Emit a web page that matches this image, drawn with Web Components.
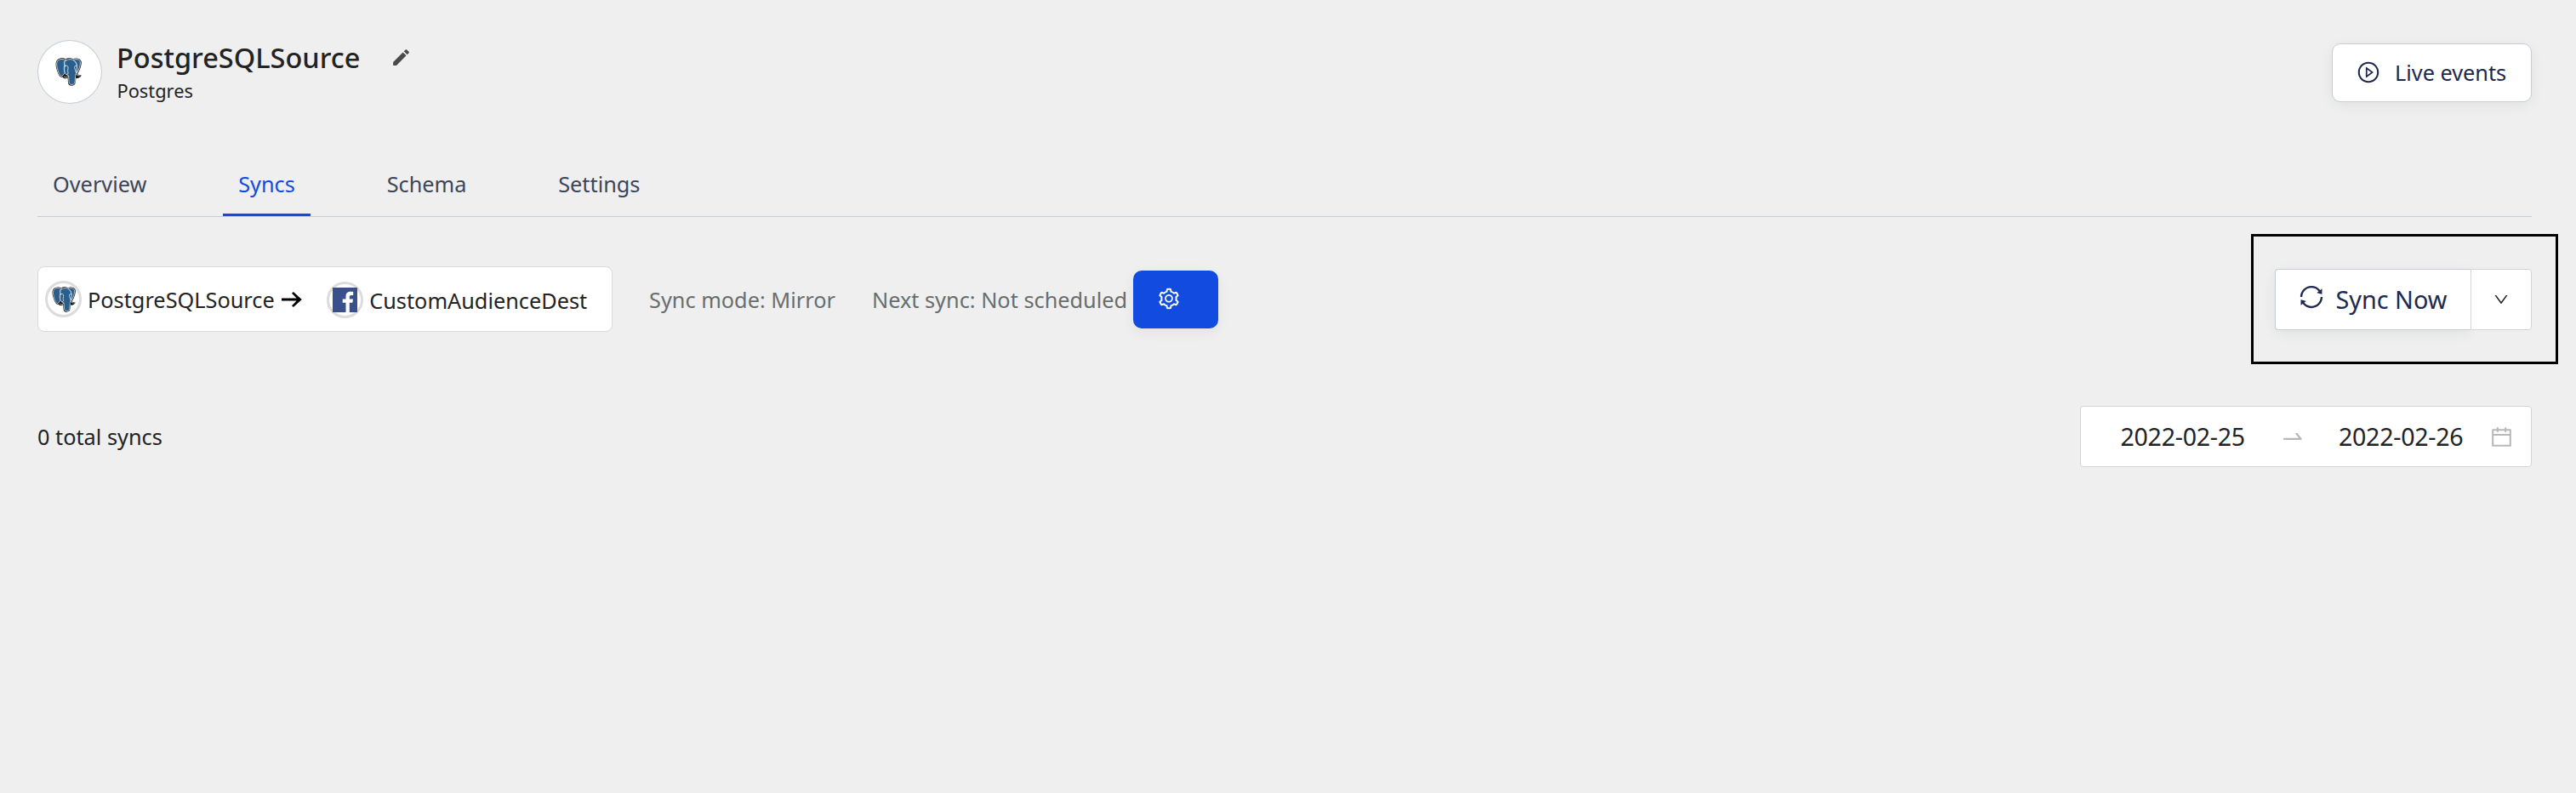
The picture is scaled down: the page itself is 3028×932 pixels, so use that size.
<!DOCTYPE html>
<html lang="en">
<head>
<meta charset="utf-8">
<title>PostgreSQLSource – Syncs</title>
<style>
body{margin:0;background:#efefef;color:#232323;font:25.3px/32px "Noto Sans",sans-serif}
</style>
</head>
<body>
<syncs-page></syncs-page>
<script>
const define=(name,html,setup)=>{
  const t=document.createElement('template');
  t.innerHTML=html;
  customElements.define(name,class extends HTMLElement{
    connectedCallback(){
      if(this.shadowRoot)return;
      this.attachShadow({mode:'open'}).append(t.content.cloneNode(true));
      if(setup)setup(this,this.shadowRoot);
    }
  });
};

const ICONS={
  sync:['0 0 1024 1024','M168 504.2c1-43.7 10-86.1 26.9-126 17.3-41 42.1-77.7 73.7-109.4S337 212.3 378 195c42.4-17.9 87.4-27 133.9-27s91.5 9.1 133.8 27A341.5 341.5 0 01755 268.8c9.9 9.9 19.2 20.4 27.8 31.4l-60.2 47a8 8 0 003 14.1l175.7 43c5 1.2 9.9-2.6 9.9-7.7l.8-180.9c0-6.7-7.7-10.5-12.9-6.3l-56.4 44.1C765.8 155.1 646.2 92 511.8 92 282.7 92 96.3 275.6 92 503.8a8 8 0 008 8.2h60c4.4 0 7.9-3.5 8-7.8zm756 7.8h-60c-4.4 0-7.9 3.5-8 7.8-1 43.7-10 86.1-26.9 126-17.3 41-42.1 77.8-73.7 109.4A342.45 342.45 0 01512.1 856a342.24 342.24 0 01-243.2-100.8c-9.9-9.9-19.2-20.4-27.8-31.4l60.2-47a8 8 0 00-3-14.1l-175.7-43c-5-1.2-9.9 2.6-9.9 7.7l-.7 181c0 6.7 7.7 10.5 12.9 6.3l56.4-44.1C258.2 868.9 377.8 932 512.2 932c229.2 0 415.5-183.7 419.8-411.8a8 8 0 00-8-8.2z'],
  down:['0 0 1024 1024','M884 256h-75c-5.1 0-9.9 2.5-12.9 6.6L512 654.2 227.9 262.6c-3-4.1-7.8-6.6-12.9-6.6h-75c-6.5 0-10.3 7.4-6.5 12.7l352.6 486.1c12.8 17.6 39 17.6 51.7 0l352.6-486.1c3.9-5.3.1-12.7-6.4-12.7z'],
  swap:['0 0 1024 1024','M873.1 596.2l-164-208A32 32 0 00684 376h-64.8c-6.7 0-10.4 7.7-6.3 13l144.3 183H152c-4.4 0-8 3.6-8 8v60c0 4.4 3.6 8 8 8h695.9c26.8 0 41.7-30.8 25.2-51.8z'],
  calendar:['0 0 1024 1024','M880 184H712v-64c0-4.4-3.6-8-8-8h-56c-4.4 0-8 3.6-8 8v64H384v-64c0-4.4-3.6-8-8-8h-56c-4.4 0-8 3.6-8 8v64H144c-17.7 0-32 14.3-32 32v664c0 17.7 14.3 32 32 32h736c17.7 0 32-14.3 32-32V216c0-17.7-14.3-32-32-32zm-40 656H184V460h656v380zM184 392V256h128v48c0 4.4 3.6 8 8 8h56c4.4 0 8-3.6 8-8v-48h256v48c0 4.4 3.6 8 8 8h56c4.4 0 8-3.6 8-8v-48h128v136H184z'],
  play:['0 0 1024 1024','M512 64C264.6 64 64 264.6 64 512s200.6 448 448 448 448-200.6 448-448S759.4 64 512 64zm0 820c-205.4 0-372-166.6-372-372s166.6-372 372-372 372 166.6 372 372-166.6 372-372 372zM719.4 499.1l-296.1-215A15.9 15.9 0 00398 297v430c0 13.1 14.8 20.5 25.3 12.9l296.1-215a15.9 15.9 0 000-25.8zm-257.6 134V390.9L628.5 512 461.8 633.1z'],
  gear:['0 0 1024 1024','M924.8 625.7l-65.5-56c3.1-19 4.7-38.4 4.7-57.8s-1.6-38.8-4.7-57.8l65.5-56a32.03 32.03 0 009.3-35.2l-.9-2.6a443.74 443.74 0 00-79.7-137.9l-1.8-2.1a32.12 32.12 0 00-35.1-9.5l-81.3 28.9c-30-24.6-63.5-44-99.7-57.6l-15.7-85a32.05 32.05 0 00-25.8-25.7l-2.7-.5c-52.1-9.4-106.9-9.4-159 0l-2.7.5a32.05 32.05 0 00-25.8 25.7l-15.8 85.4a351.86 351.86 0 00-99 57.4l-81.9-29.1a32 32 0 00-35.1 9.5l-1.8 2.1a446.02 446.02 0 00-79.7 137.9l-.9 2.6c-4.5 12.5-.8 26.5 9.3 35.2l66.3 56.6c-3.1 18.8-4.6 38-4.6 57.1 0 19.2 1.5 38.4 4.6 57.1L99 625.5a32.03 32.03 0 00-9.3 35.2l.9 2.6c18.1 50.4 44.9 96.9 79.7 137.9l1.8 2.1a32.12 32.12 0 0035.1 9.5l81.9-29.1c29.8 24.5 63.1 43.9 99 57.4l15.8 85.4a32.05 32.05 0 0025.8 25.7l2.7.5a449.4 449.4 0 00159 0l2.7-.5a32.05 32.05 0 0025.8-25.7l15.7-85a350 350 0 0099.7-57.6l81.3 28.9a32 32 0 0035.1-9.5l1.8-2.1c34.8-41.1 61.6-87.5 79.7-137.9l.9-2.6c4.5-12.3.8-26.3-9.3-35zM788.3 465.9c2.5 15.1 3.8 30.6 3.8 46.1s-1.3 31-3.8 46.1l-6.6 40.1 74.7 63.9a370.03 370.03 0 01-42.6 73.6L721 702.8l-31.4 25.8c-23.9 19.6-50.5 35-79.3 45.8l-38.1 14.3-17.9 97a377.5 377.5 0 01-85 0l-17.9-97.2-37.8-14.5c-28.5-10.8-55-26.2-78.7-45.7l-31.4-25.9-93.4 33.2c-17-22.9-31.2-47.6-42.6-73.6l75.5-64.5-6.5-40c-2.4-14.9-3.7-30.3-3.7-45.5 0-15.3 1.2-30.6 3.7-45.5l6.5-40-75.5-64.5c11.3-26.1 25.6-50.7 42.6-73.6l93.4 33.2 31.4-25.9c23.7-19.5 50.2-34.9 78.7-45.7l37.9-14.3 17.9-97.2c28.1-3.2 56.8-3.2 85 0l17.9 97 38.1 14.3c28.7 10.8 55.4 26.2 79.3 45.8l31.4 25.8 92.8-32.9c17 22.9 31.2 47.6 42.6 73.6L781.8 426l6.5 39.9zM512 326c-97.2 0-176 78.8-176 176s78.8 176 176 176 176-78.8 176-176-78.8-176-176-176zm79.2 255.2A111.6 111.6 0 01512 614c-29.9 0-58-11.7-79.2-32.8A111.6 111.6 0 01400 502c0-29.9 11.7-58 32.8-79.2C454 401.6 482.1 390 512 390c29.9 0 58 11.6 79.2 32.8A111.6 111.6 0 01624 502c0 29.9-11.7 58-32.8 79.2z'],
  edit:['0 0 24 24','M3 17.25V21h3.75L17.81 9.94l-3.75-3.75L3 17.25zM20.71 7.04a.996.996 0 000-1.41l-2.34-2.34a.996.996 0 00-1.41 0l-1.83 1.83 3.75 3.75 1.83-1.83z'],
  arrow:['0 0 24 18','M0 7.4h17.6L12 1.8 13.9 0 23.7 9l-9.8 9-1.9-1.8 5.6-5.6H0z']
};
define('ui-icon','<style>:host{display:block;flex:none}svg{display:block;width:100%;height:100%;fill:currentColor}</style><svg><path/></svg>',(el,root)=>{
  const [box,d]=ICONS[el.getAttribute('name')];
  root.querySelector('svg').setAttribute('viewBox',box);
  root.querySelector('path').setAttribute('d',d);
});

define('postgres-logo',`<style>:host{display:block;flex:none}svg{display:block;width:100%;height:100%}</style>
<svg viewBox="0 0 93 98" stroke-linejoin="round" stroke-linecap="round">
<path fill="#111" d="M10 4C18-1 30 0 36 3 46-1 56 0 62 3 74-2 89 1 92 12 94 26 85 46 78 57 82 60 88 58 92 61 90 69 80 72 73 71 72 80 73 90 67 95 60 99 49 99 46 91 44 84 45 76 44 70 38 74 28 73 26 67 18 71 12 62 8 50 3 36-4 13 10 4Z"/>
<g fill="#2a5f8d" stroke="#fff" stroke-width="2.2">
<path d="M33 6C25 2 15 4 10 8 1 16 6 34 10 47 13 57 19 68 25 63L34 52C30 42 30 32 33 25 30 18 30 10 38 6Z"/>
<path d="M64 6C74 2 86 4 88 13 90 26 83 43 76 54 73 49 75 44 74 38 79 25 74 14 64 6Z"/>
<path d="M34 27C29 16 35 7 47 5 60 2 71 10 75 23 79 34 75 46 73 56 69 66 71 79 69 87 66 95 53 97 49 89 46 80 49 70 46 62 39 59 32 54 32 44 31 37 33 32 34 27Z"/>
</g>
<path fill="none" stroke="#fff" stroke-width="2.2" d="M34 29C38 25 44 26 45 32 46 39 42 45 45 51 47 55 43 58 38 59M31 66C36 70 43 68 46 64M74 57C77 63 83 63 88 62M75 29C71 26 67 28 68 34 69 40 72 44 73 50"/>
</svg>`);

define('facebook-logo',`<style>:host{display:block;flex:none}svg{display:block;width:100%;height:100%}</style>
<svg viewBox="0 0 29 29"><path fill="#39508c" d="M0 0h29v29H0z"/><path fill="#fff" d="M15.5 29V17.8h-3.8v-4.4h3.8v-3c0-3.9 2.3-5.6 5.8-5.6 1.4 0 2.4.1 2.9.2v3.9h-2.2c-1.7 0-2.2.8-2.2 2.1v2.4h4.2l-.6 4.4h-3.6V29z"/></svg>`);

define('source-header',`<style>
:host{display:flex;align-items:center;justify-content:space-between;height:76px}
.id{display:flex;align-items:flex-start;height:76px}
.avatar{box-sizing:border-box;width:76px;height:75px;border:1px solid #c3cdd6;border-radius:50%;background:#fff;display:grid;place-items:center}
.avatar postgres-logo{width:31px;height:33px;margin-right:3px}
.text{margin-left:17px}
.title{display:flex;align-items:center;height:41px;font-size:32.5px;font-weight:500}
.title ui-icon{width:25px;height:25px;margin-left:36px;color:#4a4a4a}
.sub{font-size:21.8px;line-height:30px;margin:4px 0 0 .5px}
</style>
<div class="id"><div class="avatar"><postgres-logo></postgres-logo></div>
<div class="text"><div class="title"><slot name="title"></slot><ui-icon name="edit"></ui-icon></div><div class="sub"><slot name="type"></slot></div></div></div>
<slot name="action"></slot>`);

define('live-button',`<style>
:host{box-sizing:border-box;display:flex;align-items:center;width:235px;height:69px;padding-left:27.5px;border:1px solid #c3cdd6;border-radius:10px;background:#fff;color:#20284f;box-shadow:0 4px 16px rgba(0,0,0,.06)}
ui-icon{width:28px;height:28px;margin-right:17.5px}
</style><ui-icon name="play"></ui-icon><slot></slot>`);

define('tab-bar',`<style>:host{display:flex;align-items:flex-end;gap:71.8px;height:131px;border-bottom:1px solid #c3cdd6}</style><slot></slot>`);
define('tab-item',`<style>
:host{display:block;box-sizing:border-box;height:74px;line-height:72px;padding:0 18px;color:#3d4556}
:host([active]){color:#124be0;border-bottom:3px solid #124be0}
</style><slot></slot>`);

define('sync-flow',`<style>
:host{box-sizing:border-box;display:flex;align-items:center;width:676px;height:77px;padding-left:8px;border:1px solid #dadada;border-radius:8px;background:#fff}
.ring{box-sizing:border-box;width:43px;height:43px;border:3px solid #dcdcdc;border-radius:50%;display:grid;place-items:center}
postgres-logo{width:28px;height:30px}
facebook-logo{width:29px;height:29px}
.name{margin-left:7px}
.arrow{width:24px;height:18px;margin:0 29.5px 0 8px;color:#000}
.dest{display:flex;align-items:center;margin-top:2px}
.dest .name{margin-left:7px}
</style>
<div class="ring"><postgres-logo></postgres-logo></div><div class="name"><slot name="from"></slot></div>
<ui-icon class="arrow" name="arrow"></ui-icon>
<div class="dest"><div class="ring"><facebook-logo></facebook-logo></div><div class="name"><slot name="to"></slot></div></div>`);

define('settings-button',`<style>
:host{box-sizing:border-box;display:flex;align-items:center;width:100px;height:68px;padding-left:28.5px;border-radius:10px;background:#124be0;color:#fff;box-shadow:0 4px 16px rgba(0,0,0,.06)}
ui-icon{width:28px;height:28px;margin-top:-2px}
</style><ui-icon name="gear"></ui-icon>`);

define('sync-button',`<style>
:host{position:relative;display:flex;width:302px;height:72px;color:#20284f;font-size:28.8px}
/* frame drawn over the page around the button */
:host::after{content:"";position:absolute;left:-28.5px;top:-40.5px;width:355px;height:147px;border:3px solid #000}
.main{box-sizing:border-box;display:flex;align-items:center;width:230px;padding-left:26px;border:1px solid #c3cdd6;border-right:0;border-radius:4px 0 0 4px;background:#fff;box-shadow:0 4px 16px rgba(0,0,0,.06)}
.main ui-icon{width:32px;height:32px;margin:-5px 12.5px 0 0}
.more{box-sizing:border-box;position:relative;display:grid;place-items:center;width:72px;border:1px solid #d3d3d3;border-radius:0 4px 4px 0;background:#fff;color:#222}
.more ui-icon{width:20px;height:20px}
</style><div class="main"><ui-icon name="sync"></ui-icon><slot></slot></div><div class="more"><ui-icon name="down"></ui-icon></div>`);

define('date-range',`<style>
:host{box-sizing:border-box;display:flex;align-items:center;width:531px;height:72px;padding-left:46.5px;border:1px solid #d3d3d3;border-radius:4px;background:#fff;font-size:28.6px;letter-spacing:-.3px}
.day{width:147px}
.swap{width:30px;height:30px;margin:0 39.5px 0 40px;color:#b8b8b8}
.cal{width:29px;height:29px;margin-left:30px;color:#b8b8b8}
</style><div class="day"><slot name="start"></slot></div><ui-icon class="swap" name="swap"></ui-icon><div class="day"><slot name="end"></slot></div><ui-icon class="cal" name="calendar"></ui-icon>`);

define('syncs-page',`<style>
:host{display:block;box-sizing:border-box;height:932px;padding:47px 52px 0 44px}
.row{display:flex;align-items:center}
.status{margin-top:58px;height:77px;color:#686e6e}
.status sync-flow,.history{color:#232323}
.mode{margin-left:43px}
.next{margin-left:43px}
settings-button{margin-left:6.5px}
sync-button,date-range{margin-left:auto}
.history{margin-top:87px;height:72px}
</style>
<source-header><span slot="title">PostgreSQLSource</span><span slot="type">Postgres</span><live-button slot="action">Live events</live-button></source-header>
<tab-bar><tab-item>Overview</tab-item><tab-item active>Syncs</tab-item><tab-item>Schema</tab-item><tab-item>Settings</tab-item></tab-bar>
<div class="row status"><sync-flow><span slot="from">PostgreSQLSource</span><span slot="to">CustomAudienceDest</span></sync-flow>
<span class="mode">Sync mode: Mirror</span><span class="next">Next sync: Not scheduled</span><settings-button></settings-button><sync-button>Sync Now</sync-button></div>
<div class="row history"><span>0 total syncs</span><date-range><span slot="start">2022-02-25</span><span slot="end">2022-02-26</span></date-range></div>`);
</script>
</body>
</html>
